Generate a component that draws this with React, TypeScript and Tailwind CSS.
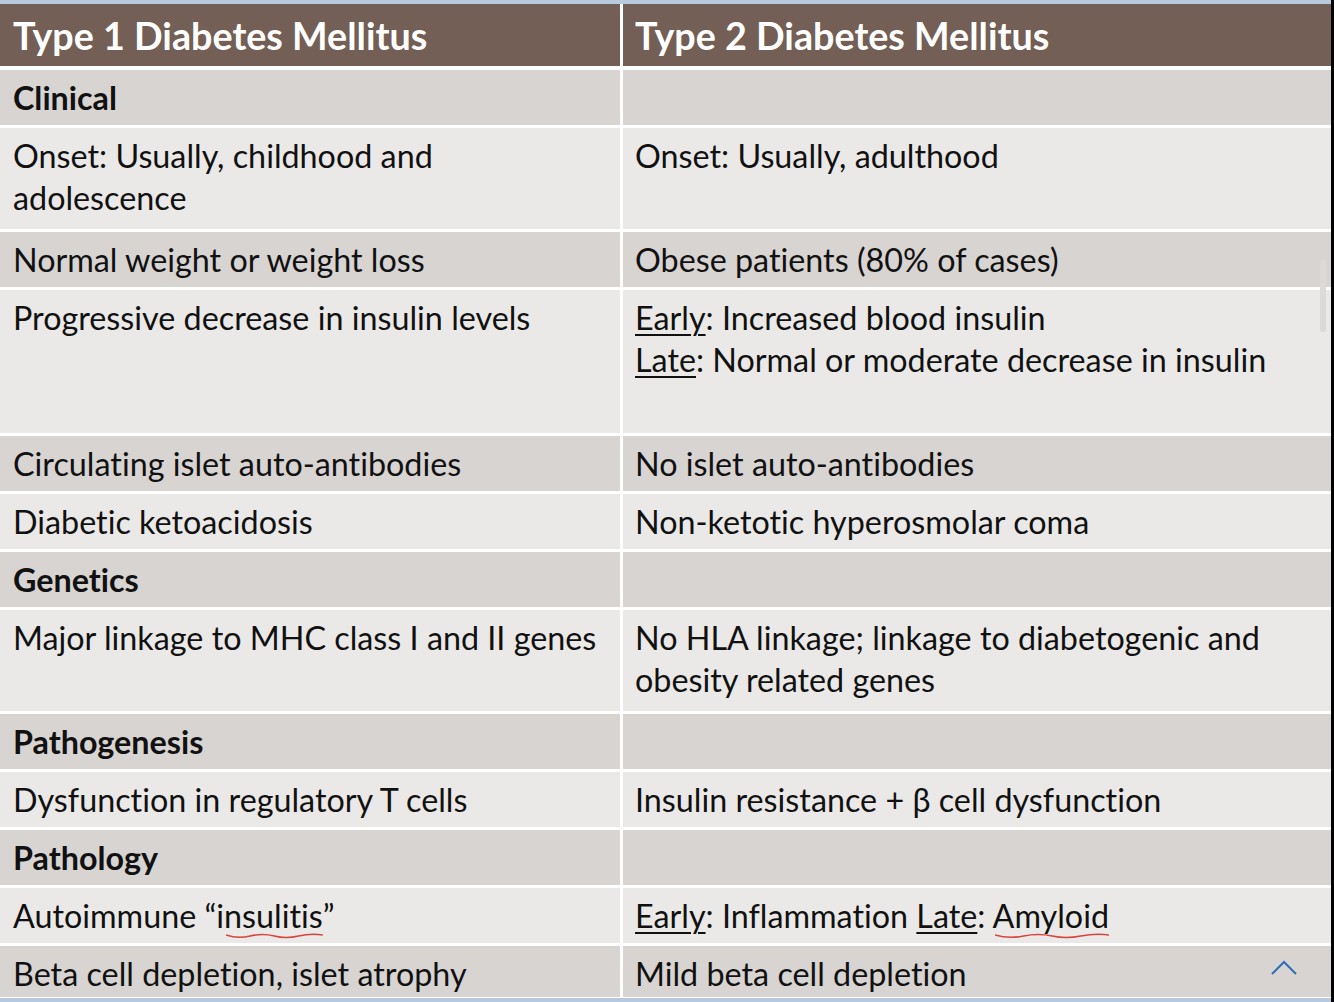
import React from 'react';

const DARK = 'bg-[#d7d4d2]';
const LIGHT = 'bg-[#eae9e7]';

type Row = {
  left: React.ReactNode;
  right?: React.ReactNode;
  h: string;
  tone: 'dark' | 'light';
  section?: boolean;
};

function U({ children }: { children: React.ReactNode }) {
  return <span className="underline decoration-[1.5px] underline-offset-[4px]">{children}</span>;
}

// spell-check squiggle, drawn under the word
function Typo({ children }: { children: React.ReactNode }) {
  return (
    <span className="relative">
      {children}
      <svg
        viewBox="0 0 100 6"
        preserveAspectRatio="none"
        className="absolute bottom-[-4px] left-[2px] h-[6px] w-[calc(100%-2px)]"
        fill="none"
        stroke="#d7453d"
        strokeWidth="1.6"
      >
        <path d="M0 2 Q 12 6 25 3 T 50 3 T 75 3 T 100 2" vectorEffect="non-scaling-stroke" />
      </svg>
    </span>
  );
}

const rows: Row[] = [
  { left: 'Clinical', h: 'h-[55px]', tone: 'dark', section: true },
  {
    left: (
      <>
        Onset: Usually, childhood and
        <br />
        adolescence
      </>
    ),
    right: 'Onset: Usually, adulthood',
    h: 'h-[101px]',
    tone: 'light',
  },
  { left: 'Normal weight or weight loss', right: 'Obese patients (80% of cases)', h: 'h-[55px]', tone: 'dark' },
  {
    left: 'Progressive decrease in insulin levels',
    right: (
      <>
        <U>Early</U>: Increased blood insulin
        <br />
        <U>Late</U>: Normal or moderate decrease in insulin
      </>
    ),
    h: 'h-[143px]',
    tone: 'light',
  },
  { left: 'Circulating islet auto-antibodies', right: 'No islet auto-antibodies', h: 'h-[55px]', tone: 'dark' },
  { left: 'Diabetic ketoacidosis', right: 'Non-ketotic hyperosmolar coma', h: 'h-[55px]', tone: 'light' },
  { left: 'Genetics', h: 'h-[55px]', tone: 'dark', section: true },
  {
    left: 'Major linkage to MHC class I and II genes',
    right: (
      <>
        No HLA linkage; linkage to diabetogenic and
        <br />
        obesity related genes
      </>
    ),
    h: 'h-[101px]',
    tone: 'light',
  },
  { left: 'Pathogenesis', h: 'h-[55px]', tone: 'dark', section: true },
  {
    left: 'Dysfunction in regulatory T cells',
    right: 'Insulin resistance + β cell dysfunction',
    h: 'h-[55px]',
    tone: 'light',
  },
  { left: 'Pathology', h: 'h-[55px]', tone: 'dark', section: true },
  {
    left: (
      <>
        Autoimmune “i<Typo>nsulitis</Typo>”
      </>
    ),
    right: (
      <>
        <U>Early</U>: Inflammation <U>Late</U>: <Typo>Amyloid</Typo>
      </>
    ),
    h: 'h-[55px]',
    tone: 'light',
  },
  { left: 'Beta cell depletion, islet atrophy', right: 'Mild beta cell depletion', h: 'h-[51px]', tone: 'dark' },
];

export default function App() {
  return (
    <div className="flex h-[1002px] w-[1334px] overflow-hidden bg-black font-['Lato','Liberation_Sans',sans-serif] text-[32.3px] text-[#111] [font-variant-ligatures:none] [font-feature-settings:'liga'_0,'clig'_0,'dlig'_0]">
      <div className="flex w-[1331px] flex-col bg-white">
        <div className="h-[4px] bg-[#b9c9dd]" />
        <div className="grid grid-cols-[620px_708px] gap-x-[3px]">
          <div className="h-[62px] bg-[#735f55] pl-[13px] pt-[11px] text-[37.7px] font-bold leading-[42px] text-white">
            Type 1 Diabetes Mellitus
          </div>
          <div className="h-[62px] bg-[#735f55] pl-[12px] pt-[11px] text-[37.7px] font-bold leading-[42px] text-white">
            Type 2 Diabetes Mellitus
          </div>
        </div>
        <div className="mt-[4px] grid grid-cols-[620px_708px] gap-x-[3px] gap-y-[3px]">
          {rows.map((r, i) => {
            const bg = r.tone === 'dark' ? DARK : LIGHT;
            const isLast = i === rows.length - 1;
            return (
              <React.Fragment key={i}>
                <div className={`${r.h} ${bg} pl-[13px] pt-[7px] leading-[42px] ${r.section ? 'font-bold' : ''}`}>
                  {r.left}
                </div>
                <div className={`${r.h} ${bg} relative pl-[12px] pt-[7px] leading-[42px]`}>
                  {r.right}
                  {isLast && (
                    <svg
                      viewBox="0 0 26 16"
                      className="absolute right-[34px] top-[14px] h-[16px] w-[26px]"
                      fill="none"
                      stroke="#2f6fb5"
                      strokeWidth="2"
                    >
                      <path d="M1 14L13 2l12 12" />
                    </svg>
                  )}
                  {i === 3 && (
                    <div className="absolute right-[5px] top-[-30px] h-[72px] w-[6px] rounded-full bg-[#dcdad8]" />
                  )}
                </div>
              </React.Fragment>
            );
          })}
        </div>
        <div className="mt-[1px] h-[4px] bg-[#b9c9dd]" />
      </div>
    </div>
  );
}
